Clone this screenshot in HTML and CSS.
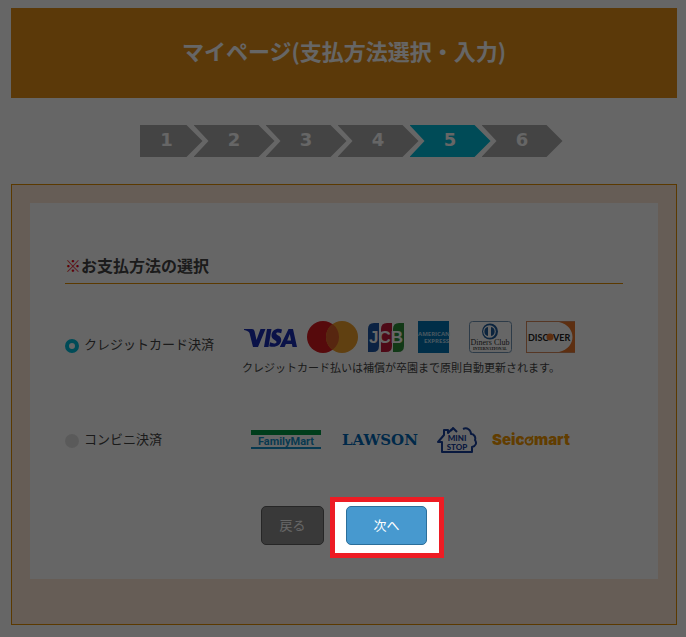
FILE: index.html
```html
<!DOCTYPE html>
<html lang="ja">
<head>
  <meta charset="UTF-8" />
  <meta name="viewport" content="width=device-width, initial-scale=1" />
  <title>マイページ(支払方法選択・入力)</title>
  <link rel="stylesheet" href="styles.css">
</head>
<body>

<header class="page-title">
  <h1>マイページ(支払方法選択・入力)</h1>
</header>

<ol class="steps">
  <li>1</li>
  <li>2</li>
  <li>3</li>
  <li>4</li>
  <li class="current" aria-current="step">5</li>
  <li>6</li>
</ol>

<main class="panel">
  <form class="payment">
    <h2><span class="required">※</span>お支払方法の選択</h2>

    <div class="method method-card">
      <label for="pay_card"><input type="radio" id="pay_card" name="payment" value="card" checked />クレジットカード決済</label>
      <div>
        <div class="card-logos">
          <svg width="55" height="32" viewBox="0 0 55 32" role="img" aria-label="VISA">
            <path fill="#1a2fb5" d="M2 8h8q2 0 2.500 2l2 9 4-11h5l-7.500 18h-5L7.500 12Q6.500 10 2 9z"/>
            <path fill="#1a2fb5" d="M25 8h4.500l-3 18H22z"/>
            <path fill="#1a2fb5" d="M40 8.500l-.8 3.700c-3-1.200-5-.9-5 .4 0 1.800 5 2 5 6.200 0 6-6.500 8.300-12 6.400l.8-3.900c3 1.500 6.500 1.500 6.500-.4 0-2-5-2.300-5-6.200 0-5.800 5.800-8.200 10.500-6.200z"/>
            <path fill="#1a2fb5" fill-rule="evenodd" d="M46.500 8H51l4 18h-4.500l-.6-3h-6l-1.300 3h-4.800zM47.800 13l-2.600 6.600h3.900z"/>
          </svg>
          <svg width="51" height="32" viewBox="0 0 51 32" role="img" aria-label="Mastercard">
            <circle cx="16" cy="16" r="16" fill="#d71920"/>
            <circle cx="35" cy="16" r="16" fill="#f0a02c"/>
            <path fill="#d9602a" d="M25.500 3.100a16 16 0 0 1 0 25.800 16 16 0 0 1 0-25.800z"/>
          </svg>
          <svg width="37" height="32" viewBox="0 0 37 32" role="img" aria-label="JCB">
            <path fill="#1c56a5" d="M6 2h5v23q0 6-6 6H0V8q0-6 6-6z"/>
            <path fill="#c41a3b" d="M19 2h5v23q0 6-6 6h-5V8q0-6 6-6z"/>
            <path fill="#2f8f3b" d="M31 2h5v23q0 6-6 6h-5V8q0-6 6-6z"/>
            <text x="18" y="22" class="jcb">JCB</text>
          </svg>
          <svg width="37" height="32" viewBox="0 0 37 32" role="img" aria-label="American Express">
            <path fill="#0073b5" d="M3 0h31v32H3z"/>
            <text x="3" y="15" class="amex">AMERICAN</text>
            <text x="34" y="22" class="amex amex-end">EXPRESS</text>
          </svg>
          <svg width="53" height="32" viewBox="0 0 53 32" role="img" aria-label="Diners Club International">
            <rect x="7.500" y=".5" width="42" height="31" rx="3" fill="#fff" stroke="#7194b5"/>
            <circle cx="28" cy="10.500" r="8" fill="#1d5b9c"/>
            <circle cx="27.500" cy="10.500" r="6.300" fill="#fff"/>
            <path fill="#1d5b9c" d="M26 6v9a4.600 4.600 0 0 1 0-9zM29 6a4.600 4.600 0 0 1 0 9z"/>
            <text x="28" y="24" class="diners">Diners Club</text>
            <text x="28" y="29" class="diners-sub">INTERNATIONAL</text>
          </svg>
          <svg width="51" height="32" viewBox="0 0 51 32" role="img" aria-label="Discover">
            <rect x="1.500" y=".5" width="48" height="31" fill="#fff" stroke="#d88a5c"/>
            <path fill="#e8762c" d="M34 1h16v30H34c18-4 18-26 0-30z"/>
            <text x="3" y="20" class="discover">DISC</text>
            <circle cx="25" cy="16" r="3.500" fill="#e8762c"/>
            <text x="28" y="20" class="discover">VER</text>
          </svg>
        </div>
        <p class="note">クレジットカード払いは補償が卒園まで原則自動更新されます。</p>
      </div>
    </div>

    <div class="method method-store">
      <label for="pay_store"><input type="radio" id="pay_store" name="payment" value="store" />コンビニ決済</label>
      <div class="store-logos">
        <svg width="76" height="26" viewBox="0 0 76 26" role="img" aria-label="FamilyMart">
          <path fill="#009944" d="M0 3h70v5H0z"/>
          <path fill="#1590c8" d="M0 20h70v2H0z"/>
          <text x="35" y="18" class="family">FamilyMart</text>
        </svg>
        <svg width="80" height="26" viewBox="0 0 80 26" role="img" aria-label="LAWSON">
          <text x="0" y="18" class="lawson">LAWSON</text>
        </svg>
        <svg width="40" height="26" viewBox="0 0 40 26" role="img" aria-label="MINISTOP">
          <path fill="none" stroke="#173f9c" stroke-width="2" stroke-linejoin="round" d="M14 4l2-3 4 4M26 2c4-2 8 1 8 5 3 0 5 3 4 6 2 3 1 6-3 7v5H5V15H1L7 8V3h4v3l4-4"/>
          <text x="20" y="14" class="mini">MINI</text>
          <text x="20" y="23" class="mini">STOP</text>
        </svg>
        <svg width="81" height="26" viewBox="0 0 81 26" role="img" aria-label="Seicomart">
          <text x="0" y="18" class="seico">Seic</text>
          <circle cx="37" cy="14" r="3.500" fill="none" stroke="#f39800" stroke-width="2"/>
          <path stroke="#f39800" stroke-width="1.500" d="M37 14l4-5"/>
          <text x="42" y="18" class="seico">mart</text>
        </svg>
      </div>
    </div>

    <div class="actions">
      <button type="button" class="btn-back">戻る</button>
      <div class="spotlight">
        <button type="submit" class="btn-next">次へ</button>
      </div>
    </div>
  </form>
</main>

</body>
</html>
```
FILE: styles.css
```css
* { box-sizing: border-box; }
html { min-height: 100%; background: #fff; }
body {
  min-height: 100vh; margin: 0; padding: 8px 9px 12px 11px;
  color: #444;
  font-family: "Noto Sans CJK JP", sans-serif;
  font-size: 13px; line-height: 20px;
}
h1, h2, p, ol { margin: 0; padding: 0; }

.page-title {
  padding: 26px 16px 32px;
  background: #e48e18; color: #fff; text-align: center;
}
h1 { font-size: 22px; line-height: 32px; }

/* progress arrows */
.steps {
  display: flex; justify-content: center;
  margin: 27px 0; padding-left: 14px; list-style: none;
}
.steps li {
  width: 81px; height: 32px; margin-left: -9px;
  background: #aaa; color: #fff; text-align: center;
  font: bold 18px/30px "DejaVu Sans", sans-serif;
  clip-path: polygon(0 0, 65px 0, 100% 50%, 65px 100%, 0 100%, 15px 50%);
}
.steps li:first-child {
  width: 63px; margin-left: 0; padding-right: 9px;
  clip-path: polygon(0 0, 47px 0, 100% 50%, 47px 100%, 0 100%);
}
.steps .current { background: #00bcd9; }

.panel {
  padding: 18px 18px 45px;
  border: 1px solid #e48e00; background: #ffe8d7;
}
.payment { padding: 49px 35px 34px; background: #fff; }
h2 {
  padding-bottom: 5px; border-bottom: 1px solid #e48e00;
  font-size: 16px; line-height: 26px;
}
.required { color: #e60012; }

.method { display: grid; grid-template-columns: 177px 1fr; align-items: center; }
.method-card { margin-top: 37px; align-items: start; }
.method-card label { padding-top: 13px; }
.method-store { margin-top: 51px; }
.method-store label { padding-bottom: 2px; }
label { display: flex; align-items: center; gap: 5px; }
input[type="radio"] {
  appearance: none; flex: none;
  width: 14px; height: 14px; margin: 4px 0 0;
  border-radius: 50%; background: #e2e2e2;
}
input[type="radio"]:checked { border: 4px solid #00bcd9; background: #fff; }

.card-logos { display: flex; gap: 10px; }
.store-logos { display: flex; gap: 15px; padding-left: 9px; }
.card-logos svg, .store-logos svg { flex: none; }
.note { margin-top: 6px; padding-bottom: 1px; font-size: 11px; line-height: 16px; }

/* lettering inside the logos */
.jcb { font: bold 17px "Liberation Sans", sans-serif; fill: #fff; text-anchor: middle; }
.amex { font: bold 6px "Open Sans", sans-serif; fill: #b5d9ee; }
.amex-end { text-anchor: end; }
.diners { font: 8px "Liberation Serif", serif; fill: #333; text-anchor: middle; }
.diners-sub { font: bold 4px "Liberation Serif", serif; fill: #333; text-anchor: middle; }
.discover { font: bold 9px Lato, sans-serif; fill: #222; }
.family { font: bold 11px Roboto, sans-serif; fill: #1590c8; text-anchor: middle; }
.lawson { font: bold 15px "DejaVu Serif", serif; fill: #0068b7; }
.mini { font: 900 8px Lato, sans-serif; fill: #173f9c; text-anchor: middle; }
.seico { font: 900 15px Inter, sans-serif; fill: #f39800; }

.actions { display: flex; justify-content: center; gap: 22px; margin-top: 53px; }
button {
  height: 39px; border-radius: 5px; padding: 0 0 3px;
  color: #fff; font: 13px "Noto Sans CJK JP", sans-serif; cursor: pointer;
}
.btn-back { width: 63px; border: 1px solid #606060; background: #8f8f8f; }
.btn-next { width: 81px; border: 1px solid #2b6f9b; background: #4799cf; }

/* frame round the next button, everything else dimmed */
.spotlight { position: relative; }
.spotlight::after {
  content: ""; position: absolute; z-index: 10;
  top: -9px; right: -17px; bottom: -13px; left: -16px;
  border: 5px solid #ed1c24;
  box-shadow: 0 0 0 1000px rgba(0, 0, 0, 0.6);
  pointer-events: none;
}
```
